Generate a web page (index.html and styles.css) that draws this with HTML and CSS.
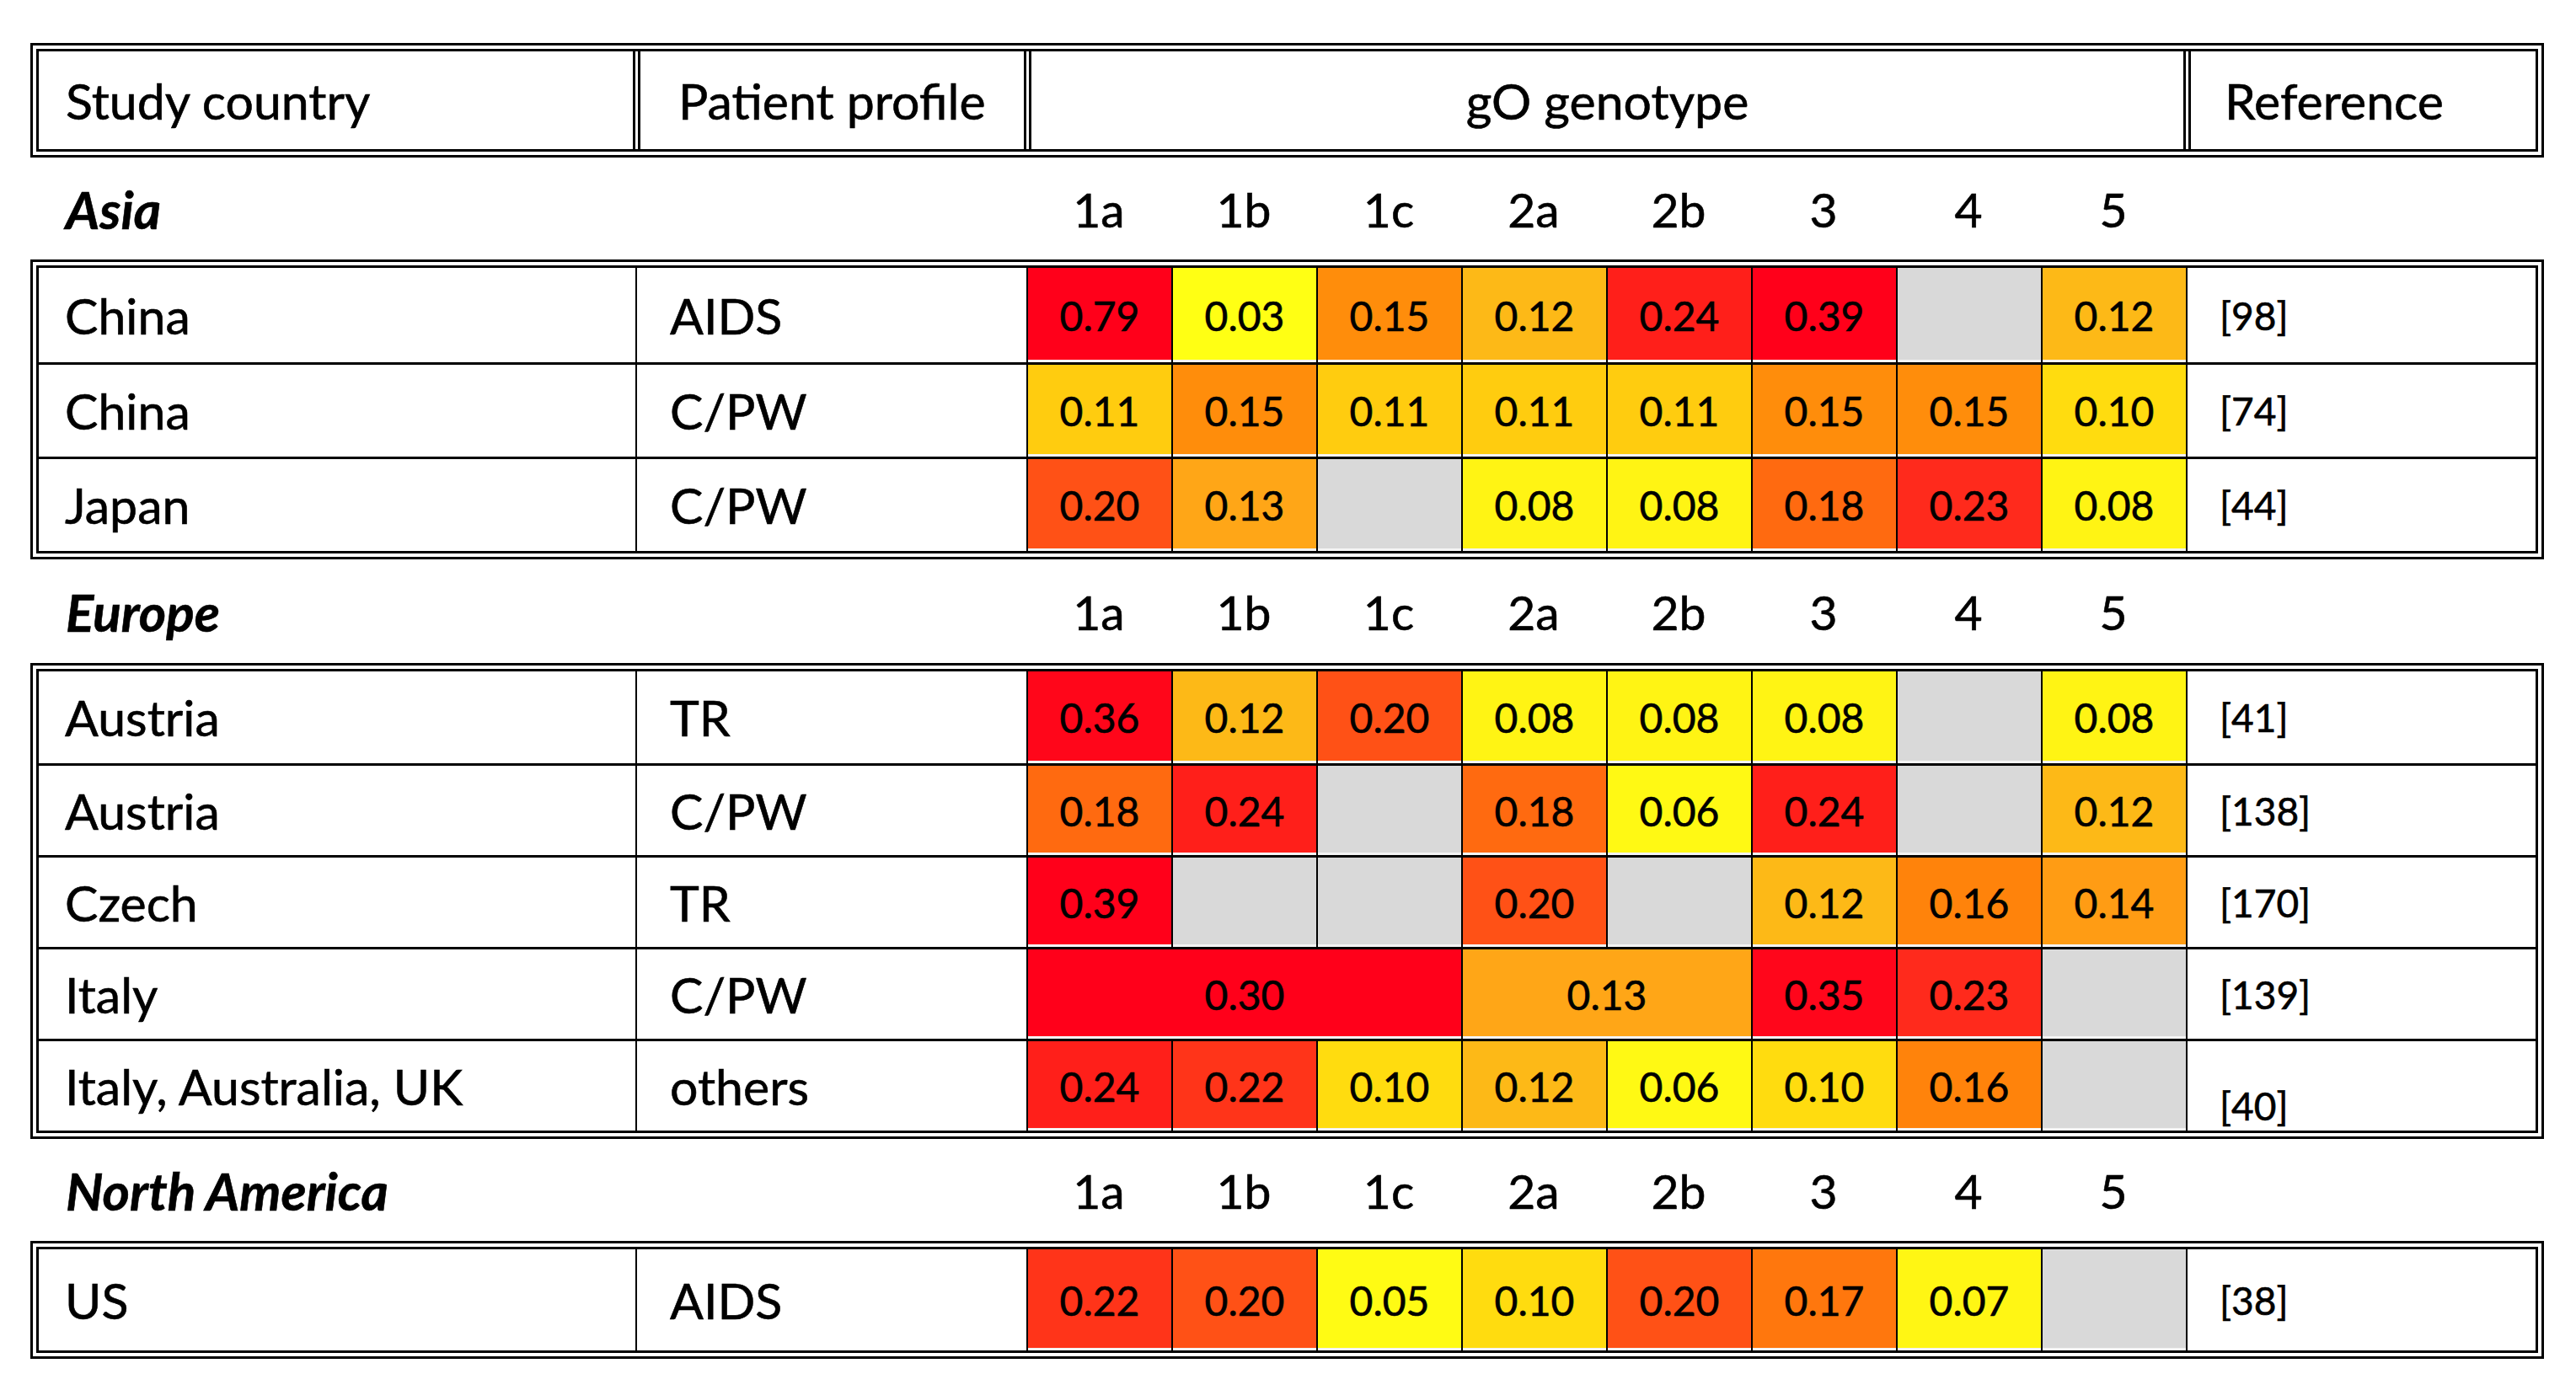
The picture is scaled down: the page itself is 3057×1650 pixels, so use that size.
FILE: index.html
```html
<!DOCTYPE html>
<html lang="en">
<head>
<meta charset="utf-8">
<title>gO genotype distribution</title>
<link rel="stylesheet" href="styles.css">
</head>
<body>
<main class="sheet">
  <div class="table head">
    <div class="hrow">
      <div class="hcell c-country">Study country</div>
      <div class="hcell c-profile">Patient profile</div>
      <div class="hcell c-geno">gO genotype</div>
      <div class="hcell c-ref">Reference</div>
    </div>
  </div>

  <div class="region gap-a">
    <div class="region-name">Asia</div>
    <div class="gt">1a</div><div class="gt">1b</div><div class="gt">1c</div><div class="gt">2a</div><div class="gt">2b</div><div class="gt">3</div><div class="gt">4</div><div class="gt">5</div>
  </div>
  <div class="table">
    <div class="row r-asia">
      <div class="cell country">China</div><div class="cell profile">AIDS</div>
      <div class="v h79">0.79</div><div class="v h03">0.03</div><div class="v h15">0.15</div><div class="v h12">0.12</div><div class="v h24">0.24</div><div class="v h39">0.39</div><div class="v na"></div><div class="v h12">0.12</div>
      <div class="cell ref">[98]</div>
    </div>
    <div class="row r-asia">
      <div class="cell country">China</div><div class="cell profile">C/PW</div>
      <div class="v h11">0.11</div><div class="v h15">0.15</div><div class="v h11">0.11</div><div class="v h11">0.11</div><div class="v h11">0.11</div><div class="v h15">0.15</div><div class="v h15">0.15</div><div class="v h10">0.10</div>
      <div class="cell ref">[74]</div>
    </div>
    <div class="row r-asia">
      <div class="cell country">Japan</div><div class="cell profile">C/PW</div>
      <div class="v h20">0.20</div><div class="v h13">0.13</div><div class="v na"></div><div class="v h08">0.08</div><div class="v h08">0.08</div><div class="v h18">0.18</div><div class="v h23">0.23</div><div class="v h08">0.08</div>
      <div class="cell ref">[44]</div>
    </div>
  </div>

  <div class="region gap-b">
    <div class="region-name">Europe</div>
    <div class="gt">1a</div><div class="gt">1b</div><div class="gt">1c</div><div class="gt">2a</div><div class="gt">2b</div><div class="gt">3</div><div class="gt">4</div><div class="gt">5</div>
  </div>
  <div class="table">
    <div class="row r-eu">
      <div class="cell country">Austria</div><div class="cell profile">TR</div>
      <div class="v h36">0.36</div><div class="v h12">0.12</div><div class="v h20">0.20</div><div class="v h08">0.08</div><div class="v h08">0.08</div><div class="v h08">0.08</div><div class="v na"></div><div class="v h08">0.08</div>
      <div class="cell ref">[41]</div>
    </div>
    <div class="row r-eu">
      <div class="cell country">Austria</div><div class="cell profile">C/PW</div>
      <div class="v h18">0.18</div><div class="v h24">0.24</div><div class="v na"></div><div class="v h18">0.18</div><div class="v h06">0.06</div><div class="v h24">0.24</div><div class="v na"></div><div class="v h12">0.12</div>
      <div class="cell ref">[138]</div>
    </div>
    <div class="row r-eu">
      <div class="cell country">Czech</div><div class="cell profile">TR</div>
      <div class="v h39">0.39</div><div class="v na"></div><div class="v na"></div><div class="v h20">0.20</div><div class="v na"></div><div class="v h12">0.12</div><div class="v h16">0.16</div><div class="v h14">0.14</div>
      <div class="cell ref">[170]</div>
    </div>
    <div class="row r-eu">
      <div class="cell country">Italy</div><div class="cell profile">C/PW</div>
      <div class="v h30 span3">0.30</div><div class="v h13 span2">0.13</div><div class="v h35">0.35</div><div class="v h23">0.23</div><div class="v na"></div>
      <div class="cell ref">[139]</div>
    </div>
    <div class="row r-eu">
      <div class="cell country">Italy, Australia, UK</div><div class="cell profile">others</div>
      <div class="v h24">0.24</div><div class="v h22">0.22</div><div class="v h10">0.10</div><div class="v h12">0.12</div><div class="v h06">0.06</div><div class="v h10">0.10</div><div class="v h16">0.16</div><div class="v na"></div>
      <div class="cell ref ref-low">[40]</div>
    </div>
  </div>

  <div class="region gap-c">
    <div class="region-name">North America</div>
    <div class="gt">1a</div><div class="gt">1b</div><div class="gt">1c</div><div class="gt">2a</div><div class="gt">2b</div><div class="gt">3</div><div class="gt">4</div><div class="gt">5</div>
  </div>
  <div class="table">
    <div class="row r-us">
      <div class="cell country">US</div><div class="cell profile">AIDS</div>
      <div class="v h22">0.22</div><div class="v h20">0.20</div><div class="v h05">0.05</div><div class="v h10">0.10</div><div class="v h20">0.20</div><div class="v h17">0.17</div><div class="v h07">0.07</div><div class="v na"></div>
      <div class="cell ref">[38]</div>
    </div>
  </div>
</main>
</body>
</html>
```

FILE: styles.css
```css
* { box-sizing: border-box; }

html, body {
  margin: 0;
  background: #fff;
}

body {
  font-family: "Lato", "Open Sans", "Liberation Sans", sans-serif;
  color: #000;
  -webkit-text-stroke: 0.6px #000;
}

.sheet {
  width: 2983px;
  margin: 51px 0 0 36px;
  display: flex;
  flex-direction: column;
}

.table {
  border: 10px double #000;
}

/* header */
.hrow {
  display: grid;
  grid-template-columns: 705px 464px 1376px 1fr;
  height: 116px;
}

.hcell {
  display: flex;
  align-items: center;
  font-size: 59px;
  white-space: nowrap;
}

.hcell + .hcell {
  border-left: 9px double #000;
}

.c-country { padding-left: 32px; }
.c-profile { padding-left: 45px; }
.c-geno { justify-content: center; }
.c-ref { padding-left: 40px; }

/* region label rows */
.region {
  display: grid;
  grid-template-columns: 708px 464px repeat(8, 172px) 1fr;
  padding: 0 10px;
  align-items: center;
}

.gap-a { height: 121px; }
.gap-b { height: 123px; }
.gap-c { height: 121px; }

.region-name {
  grid-column: 1 / 3;
  padding-left: 32px;
  font-size: 62px;
  font-weight: 700;
  font-style: italic;
}

.gt {
  text-align: center;
  font-size: 57px;
}

/* body rows */
.row {
  display: grid;
  grid-template-columns: 708px 464px repeat(8, 172px) 1fr;
}

.r-asia { height: 112px; }
.r-eu { height: 109px; }
.r-us { height: 120px; }

.row + .row {
  border-top: 3px solid #000;
}

.row > * + * {
  border-left: 2px solid #000;
}

.cell {
  display: flex;
  align-items: center;
  white-space: nowrap;
}

.country {
  padding-left: 31px;
  font-size: 59px;
}

.profile {
  padding-left: 39px;
  font-size: 59px;
}

.ref {
  padding-left: 38px;
  font-size: 46px;
}

.ref-low {
  align-items: flex-end;
  padding-bottom: 2px;
}

.v {
  display: flex;
  align-items: center;
  justify-content: center;
  font-size: 48px;
  box-shadow: inset 0 -3px 0 #f4f4f4;
}

.span3 { grid-column: span 3; }
.span2 { grid-column: span 2; }

/* heat colours */
.na  { background: #d9d9d9; }
.h03 { background: #ffff14; }
.h05 { background: #fffb14; }
.h06 { background: #fff914; }
.h07 { background: #fff614; }
.h08 { background: #fff414; }
.h10 { background: #ffdc0f; }
.h11 { background: #ffcc0f; }
.h12 { background: #fdb917; }
.h13 { background: #ffa617; }
.h14 { background: #ff9c14; }
.h15 { background: #ff8d0b; }
.h16 { background: #ff830b; }
.h17 { background: #ff770d; }
.h18 { background: #ff6a10; }
.h20 { background: #ff5116; }
.h22 { background: #ff3419; }
.h23 { background: #ff2a1c; }
.h24 { background: #ff1f1a; }
.h30 { background: #ff001a; }
.h35 { background: #ff061b; }
.h36 { background: #ff061a; }
.h39 { background: #ff001a; }
.h79 { background: #ff001a; }
```
